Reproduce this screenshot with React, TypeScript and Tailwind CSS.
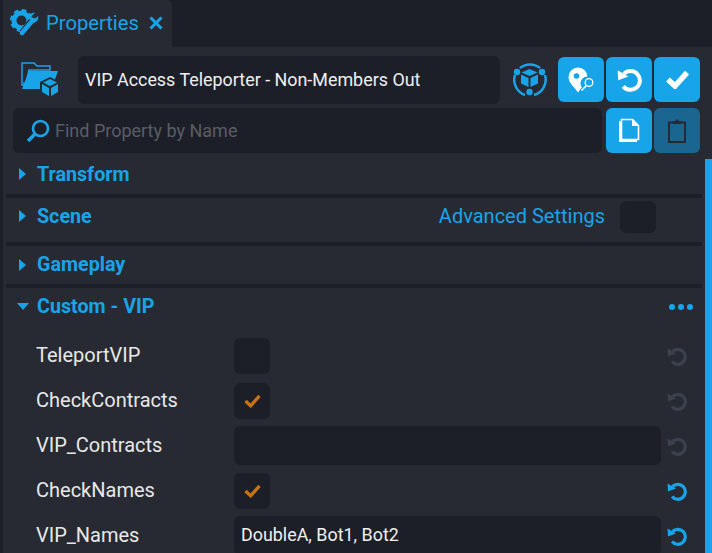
import React from 'react'

const blue = '#18a4e8'
const panel = '#272a33'

const ResetIcon = ({ className, color }: { className: string; color: string }) => (
	<svg className={className} viewBox="0 0 20 20" fill="none">
		<path d="M5.500 5.500A7.500 7.500 0 1 1 5 15.500" stroke={color} strokeWidth="3.200" />
		<path d="M0.500 2.500L9 7.500 1 10.500z" fill={color} />
	</svg>
)

const CheckIcon = ({ className, color, weight }: { className: string; color: string; weight: number }) => (
	<svg className={className} viewBox="0 0 23 19" fill="none">
		<path d="M2 9.500l7 6.500L21 2.500" stroke={color} strokeWidth={weight} />
	</svg>
)

const GearWrench = () => (
	<svg width="29" height="29" viewBox="0 0 29 29" fill="none">
		<circle cx="11.500" cy="11.500" r="7.500" stroke={blue} strokeWidth="5" />
		<circle cx="11.500" cy="11.500" r="10" stroke={blue} strokeWidth="3" strokeDasharray="4.500 3.350" />
		<path d="M25 9L13 24" stroke={panel} strokeWidth="8" />
		<path d="M23 11L12 24" stroke={blue} strokeWidth="4.500" strokeLinecap="round" />
		<path d="M28 7l-3.500 3-2.500-.5-.5-2.500L25 4c-3-1-6.500 1.500-6 5.500l4 4c3.500 .5 6-3 5-6.500z" fill={blue} />
	</svg>
)

const FolderCube = () => (
	<svg width="40" height="38" viewBox="0 0 40 38">
		<path d="M2 2h12l3 3h13v4H9L6 22H4V24H2z" fill="none" stroke={blue} strokeWidth="1.500" />
		<path d="M9 10h29l-5 14H20v4H2z" fill={blue} />
		<path d="M30 16l10 5v11l-10 6-10-6V21z" fill={panel} />
		<path d="M30 18l7 3.500-7 3.500-7-3.500z M22 23l7 4v8l-7-4z M38 23l-7 4v8l7-4z" fill={blue} />
	</svg>
)

const NetworkCube = () => (
	<svg width="34" height="34" viewBox="0 0 34 34" fill="none">
		<path d="M7 5a16 16 0 0 1 20 0M32 12a16 16 0 0 1-11 20M12 32A16 16 0 0 1 2 12" stroke={blue} strokeWidth="2.500" />
		<circle cx="4" cy="9" r="3.200" fill={blue} />
		<circle cx="29" cy="9" r="3.200" fill={blue} />
		<circle cx="16.500" cy="29" r="3.200" fill={blue} />
		<path d="M16.500 6l8 3.500-8 3.500-8-3.500z M8 11.500l7.500 3.500v9L8 20.500z M25 11.500L17.500 15v9l7.500-3.500z" fill={blue} />
	</svg>
)

const PinSearch = () => (
	<svg width="28" height="28" viewBox="0 0 28 28" fill="none">
		<path d="M11 1.500a9.500 9.500 0 0 1 9.500 9.500c0 6-6 10-9.500 15.500C7.500 21 1.500 17 1.500 11A9.500 9.500 0 0 1 11 1.500z" fill="#fff" />
		<circle cx="9.500" cy="10" r="2.800" fill={blue} />
		<circle cx="20.500" cy="17.500" r="7" fill={blue} />
		<circle cx="22" cy="16.500" r="3.800" stroke="#fff" strokeWidth="1.300" />
		<path d="M19.500 19.500l-5 5" stroke="#fff" strokeWidth="1.600" />
	</svg>
)

const Documents = () => (
	<svg width="22" height="25" viewBox="0 0 22 25" fill="none">
		<path d="M2 3v20h17" stroke="#fff" strokeWidth="2" />
		<path d="M3.500 1.500h11l6 6v14h-17z" fill={blue} stroke="#fff" strokeWidth="1.600" />
		<path d="M14 1v7h7z" fill="#fff" />
	</svg>
)

const ClipboardIcon = () => (
	<svg width="18" height="24" viewBox="0 0 18 24" fill="none" stroke={panel}>
		<rect x="1" y="3.500" width="16" height="19.500" strokeWidth="2" />
		<path d="M5 4.500V2.500h3V1h2v1.500h3v2z" fill={panel} strokeWidth="1" />
	</svg>
)

const Magnifier = () => (
	<svg width="24" height="24" viewBox="0 0 24 24" fill="none">
		<circle cx="14.500" cy="9.500" r="7.500" stroke={blue} strokeWidth="2.600" />
		<path d="M9 15l-7 7" stroke={blue} strokeWidth="3.600" />
	</svg>
)

const Section = ({ label, open }: { label: string; open?: boolean }) => (
	<div className="flex items-center">
		{open ? (
			<span className="ml-[11px] mr-[8px] h-0 w-0 border-x-[6px] border-t-[7px] border-x-transparent border-t-[#18a4e8]" />
		) : (
			<span className="ml-[13px] mr-[11px] h-0 w-0 border-y-[6px] border-l-[7px] border-y-transparent border-l-[#18a4e8]" />
		)}
		<span className="text-[19.700px] font-bold text-[#18a4e8]">{label}</span>
	</div>
)

const Divider = () => <div className="mr-[3px] h-[4px] bg-[#1c1f27]" />

const Box = ({ checked }: { checked?: boolean }) => (
	<div className="flex h-[36px] w-[36px] items-center justify-center rounded-[6px] bg-[#1c1f28]">
		{checked && <CheckIcon className="h-[14px] w-[17px]" color="#c8730f" weight={4.500} />}
	</div>
)

const Row = ({ label, active, children }: { label: string; active?: boolean; children: React.ReactNode }) => (
	<div className="flex h-[45px] items-center">
		<div className="ml-[30px] w-[198px] pb-[2px] text-[20px] text-[#e8e8e8]">{label}</div>
		<div className="flex w-[427px] items-center">{children}</div>
		<div className="ml-[6px] flex w-[20px] justify-center">
			<ResetIcon className="h-[20px] w-[20px]" color={active ? blue : '#3c414e'} />
		</div>
	</div>
)

const Btn = ({ children, dim }: { children: React.ReactNode; dim?: boolean }) => (
	<div className={`flex h-[45px] w-[46px] items-center justify-center rounded-[6px] ${dim ? 'bg-[#1a6690]' : 'bg-[#18a4e8]'}`}>
		{children}
	</div>
)

export default function App() {
	return (
		<div className="h-[553px] w-[712px] overflow-hidden bg-[#1c1f28] font-['Roboto',sans-serif]">
			{/* tab strip */}
			<div className="flex h-[47px] pl-[3px]">
				<div className="flex w-[169px] items-center rounded-tr-[6px] bg-[#272a33] pl-[7px] pb-[1px]">
					<GearWrench />
					<span className="ml-[7px] text-[20.200px] text-[#18a4e8]">Properties</span>
					<svg className="ml-[10px]" width="14" height="14" viewBox="0 0 14 14">
						<path d="M1.500 1.500l11 11M12.500 1.500l-11 11" stroke={blue} strokeWidth="3" />
					</svg>
				</div>
			</div>
			<div className="ml-[3px] h-[506px] overflow-hidden bg-[#272a33]">
				{/* name row */}
				<div className="flex h-[61px] pt-[9px]">
					<div className="ml-[17px] mt-[5px] w-[58px]"><FolderCube /></div>
					<div className="flex h-[48px] w-[422px] items-center rounded-[6px] bg-[#1c1f28] pl-[7px] text-[17.900px] text-[#f0f0f0]">
						VIP Access Teleporter - Non-Members Out
					</div>
					<div className="ml-[13px] mt-[7px] w-[45px]"><NetworkCube /></div>
					<div className="mt-[1px] flex gap-[2px]">
						<Btn><PinSearch /></Btn>
						<Btn><ResetIcon className="h-[25px] w-[25px]" color="#fff" /></Btn>
						<Btn><CheckIcon className="h-[19px] w-[23px]" color="#fff" weight={5.500} /></Btn>
					</div>
				</div>
				{/* search row */}
				<div className="flex h-[51px] pl-[10px]">
					<div className="flex h-[45px] w-[589px] items-center rounded-[6px] bg-[#1c1f28] pl-[13px]">
						<Magnifier />
						<span className="ml-[5px] text-[18px] text-[#5a5d66]">Find Property by Name</span>
					</div>
					<div className="ml-[4px] flex gap-[2px]">
						<Btn><Documents /></Btn>
						<Btn dim><ClipboardIcon /></Btn>
					</div>
				</div>
				{/* sections */}
				<div className="flex">
					<div className="min-w-0 flex-1 pl-[3px]">
						<div className="flex h-[35px] items-center pb-[4px]"><Section label="Transform" /></div>
						<Divider />
						<div className="flex h-[44px] items-center justify-between pr-[49px] pb-[7px]">
							<Section label="Scene" />
							<div className="flex items-center gap-[15px]">
								<span className="pb-[1px] text-[20px] text-[#18a4e8]">Advanced Settings</span>
								<div className="h-[32px] w-[36px] rounded-[6px] bg-[#1c1f28]" />
							</div>
						</div>
						<Divider />
						<div className="flex h-[38px] items-center"><Section label="Gameplay" /></div>
						<Divider />
						<div className="flex h-[44px] items-center justify-between pr-[12px] pb-[7px]">
							<Section label="Custom - VIP" open />
							<div className="flex gap-[3px]">
								<span className="h-[6px] w-[6px] rounded-full bg-[#18a4e8]" />
								<span className="h-[6px] w-[6px] rounded-full bg-[#18a4e8]" />
								<span className="h-[6px] w-[6px] rounded-full bg-[#18a4e8]" />
							</div>
						</div>
						<div className="pt-[1px]">
							<Row label="TeleportVIP"><Box /></Row>
							<Row label="CheckContracts"><Box checked /></Row>
							<Row label="VIP_Contracts">
								<div className="h-[39px] w-full rounded-[6px] bg-[#1c1f28]" />
							</Row>
							<Row label="CheckNames" active><Box checked /></Row>
							<Row label="VIP_Names" active>
								<div className="flex h-[39px] w-full items-center rounded-[6px] bg-[#1c1f28] pl-[7px] text-[17.900px] text-[#f0f0f0]">
									DoubleA, Bot1, Bot2
								</div>
							</Row>
						</div>
					</div>
					<div className="h-[500px] w-[7px] bg-[#18a4e8]" />
				</div>
			</div>
		</div>
	)
}
